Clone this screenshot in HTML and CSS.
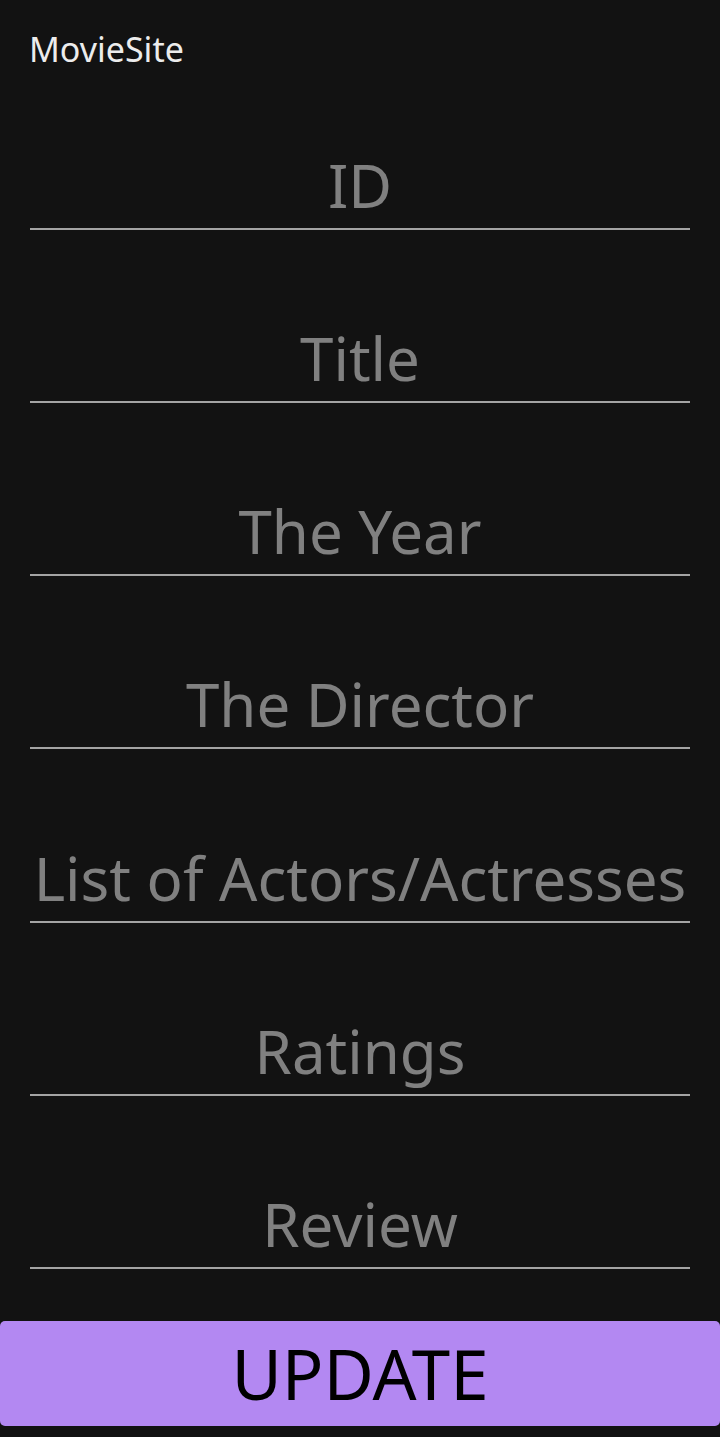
FILE: index.html
```html
<!DOCTYPE html>
<html lang="en">
<head>
<meta charset="utf-8">
<title>MovieSite</title>
<link rel="stylesheet" href="styles.css">
</head>
<body>
<header class="app-bar">MovieSite</header>
<main class="form">
  <div class="field">ID</div>
  <div class="field">Title</div>
  <div class="field">The Year</div>
  <div class="field">The Director</div>
  <div class="field">List of Actors/Actresses</div>
  <div class="field">Ratings</div>
  <div class="field">Review</div>
</main>
<button class="update-btn">UPDATE</button>
</body>
</html>
```
FILE: styles.css
```css
html, body {
  margin: 0;
  padding: 0;
  background: #121212;
}
body {
  font-family: "Noto Sans", "Open Sans", sans-serif;
  width: 720px;
  height: 1437px;
  overflow: hidden;
}
.app-bar {
  color: #ececec;
  font-size: 34px;
  line-height: 46px;
  padding: 26px 29px 0;
}
.form {
  display: flex;
  flex-direction: column;
  gap: 86.17px;
  padding: 71px 30px 0;
}
.field {
  color: #808080;
  font-size: 60px;
  line-height: 84px;
  text-align: center;
  padding-bottom: 1px;
  border-bottom: 2px solid #a4a4a4;
  white-space: nowrap;
}
.update-btn {
  display: flex;
  align-items: center;
  justify-content: center;
  box-sizing: border-box;
  width: 720px;
  height: 105px;
  margin: 52px 0 0;
  padding: 0;
  border: none;
  border-radius: 5px;
  background: #b388f2;
  color: #000;
  font-family: "Noto Sans", "Open Sans", sans-serif;
  font-size: 69px;
}
```
